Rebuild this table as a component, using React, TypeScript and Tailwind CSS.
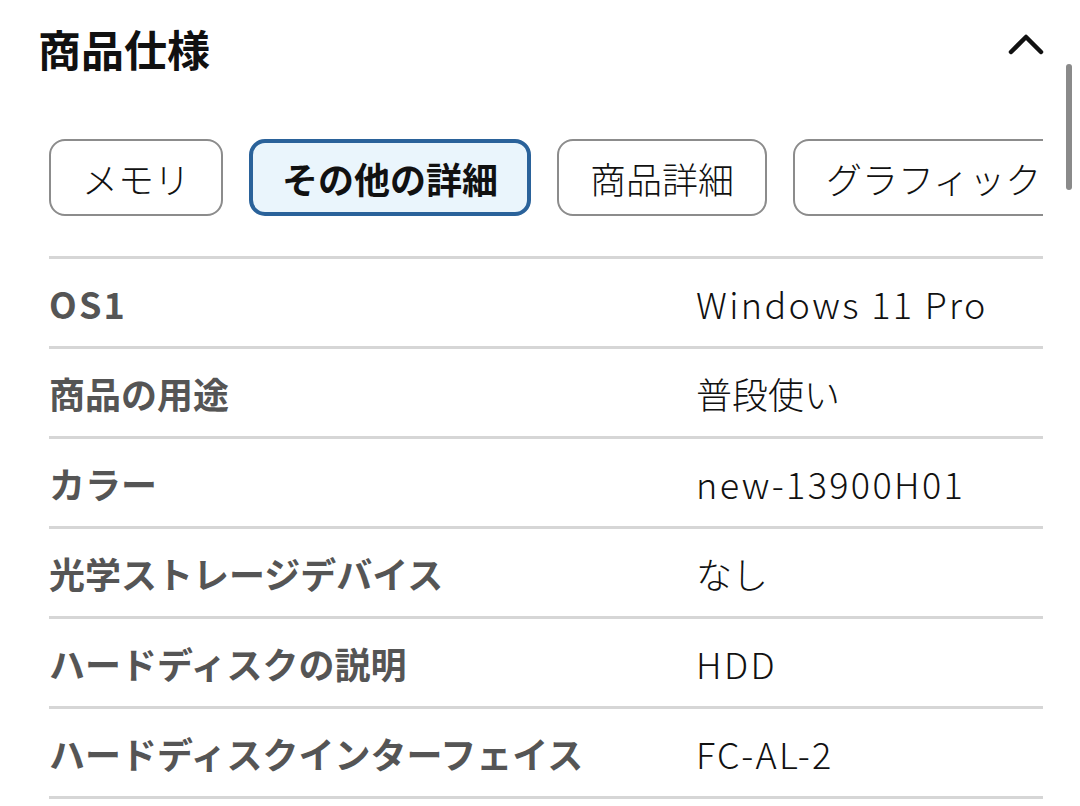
const tabs = [
  { label: "メモリ", active: false },
  { label: "その他の詳細", active: true },
  { label: "商品詳細", active: false },
  { label: "グラフィック", active: false },
];

const rows = [
  ["OS1", "Windows 11 Pro"],
  ["商品の用途", "普段使い"],
  ["カラー", "new-13900H01"],
  ["光学ストレージデバイス", "なし"],
  ["ハードディスクの説明", "HDD"],
  ["ハードディスクインターフェイス", "FC-AL-2"],
];

const isLatin = (s: string) => /^[\x00-\x7F]+$/.test(s);

export default function App() {
  return (
    <div
      className="relative w-[1080px] h-[806px] overflow-hidden bg-white"
      style={{ fontFamily: '"Noto Sans CJK JP", "Noto Sans", sans-serif' }}
    >
      <div className="pl-[38px] pr-[36px] pt-[20px] flex items-center justify-between">
        <h2 className="text-[43px] leading-[56px] font-bold text-[#111]">商品仕様</h2>
        <svg width="36" height="22" viewBox="0 0 36 22" className="mt-[-8px]">
          <polyline points="3,19 18,4 33,19" fill="none" stroke="#111" strokeWidth="4.5" strokeLinecap="round" strokeLinejoin="round" />
        </svg>
      </div>

      <div className="ml-[49px] w-[994px]">
        <div className="mt-[63px] flex gap-[26px] overflow-hidden">
          {tabs.map((t) =>
            t.active ? (
              <div
                key={t.label}
                className="shrink-0 h-[77px] px-[29px] flex items-center rounded-[16px] border-[4px] border-[#2a629a] bg-[#eaf5fc] text-[36px] font-bold text-[#111] whitespace-nowrap"
              >
                {t.label}
              </div>
            ) : (
              <div
                key={t.label}
                className="shrink-0 h-[77px] px-[31px] flex items-center rounded-[16px] border-2 border-[#8c8c8c] bg-white text-[36px] font-light text-[#111] whitespace-nowrap"
              >
                {t.label}
              </div>
            )
          )}
        </div>

        <div className="mt-[40px] border-t-[3px] border-[#d6d6d6]">
          {rows.map(([k, v]) => (
            <div key={k} className="h-[90px] flex items-center border-b-[3px] border-[#d6d6d6]">
              <div className={`w-[647px] text-[36px] font-bold text-[#555] ${isLatin(k) ? "tracking-[0.06em]" : ""}`}>{k}</div>
              <div className={`text-[36px] font-light text-[#111] ${isLatin(v) ? "tracking-[0.065em]" : ""}`}>{v}</div>
            </div>
          ))}
        </div>
      </div>

      <div className="absolute left-[1066px] top-[64px] w-[6px] h-[126px] rounded-full bg-[#8a8a8a]" />
    </div>
  );
}
